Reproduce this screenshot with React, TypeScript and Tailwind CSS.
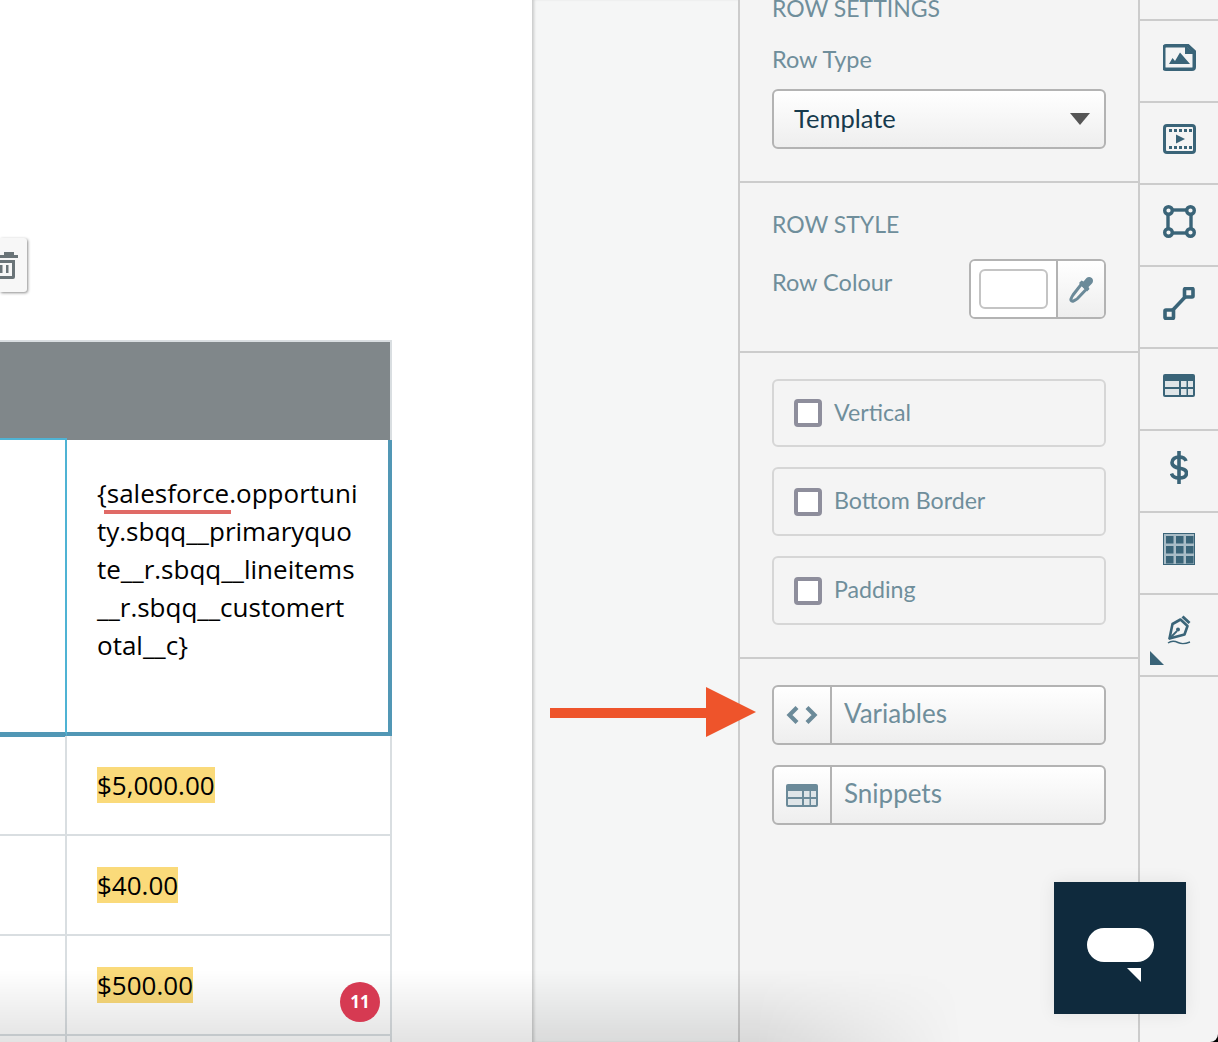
import React from 'react';

const labelFont = "[font-family:Lato,'Liberation_Sans',sans-serif]";

function ImageIcon() {
  return (
    <svg width="33" height="27" viewBox="0 0 33 27">
      <path d="M3 1.750h22l6.250 5.750v15.500a2.250 2.250 0 0 1-2.250 2.250h-26a2.250 2.250 0 0 1-2.250-2.250v-19a2.250 2.250 0 0 1 2.250-2.250z" fill="none" stroke="#3a6478" strokeWidth="3.500" />
      <path d="M22 1l10 9h-10z" fill="#3a6478" />
      <path d="M6 20l3.500-6 2.500 3 5-8.500 10 11.500z" fill="#3a6478" />
    </svg>
  );
}

function FilmIcon() {
  const dots = [6, 11, 16, 21, 26];
  return (
    <svg width="33" height="30" viewBox="0 0 33 30">
      <rect x="1.500" y="1.500" width="30" height="27" rx="2.500" fill="none" stroke="#3a6478" strokeWidth="3" />
      {dots.map((x) => (
        <React.Fragment key={x}>
          <rect x={x} y="5" width="3" height="3" fill="#3a6478" />
          <rect x={x} y="22" width="3" height="3" fill="#3a6478" />
        </React.Fragment>
      ))}
      <path d="M13 10.500l9 4.500-9 4.500z" fill="#3a6478" />
    </svg>
  );
}

function ShapeIcon() {
  return (
    <svg width="33" height="33" viewBox="0 0 33 33" fill="#f4f4f4" stroke="#3a6478" strokeWidth="3.400">
      <rect x="5" y="5" width="23" height="23" fill="none" />
      <circle cx="5.500" cy="5.500" r="3.800" />
      <circle cx="27.500" cy="5.500" r="3.800" />
      <circle cx="5.500" cy="27.500" r="3.800" />
      <circle cx="27.500" cy="27.500" r="3.800" />
    </svg>
  );
}

function LineIcon() {
  return (
    <svg width="32" height="33" viewBox="0 0 32 33" fill="#f4f4f4" stroke="#3a6478" strokeWidth="3.600">
      <path d="M8 25L24 8" fill="none" />
      <rect x="2" y="23" width="8.500" height="8.500" rx="1" />
      <rect x="21.500" y="1.500" width="8.500" height="8.500" rx="1" />
    </svg>
  );
}

function TableIcon({ color }: { color: string }) {
  return (
    <svg width="32" height="23" viewBox="0 0 32 23">
      <rect width="32" height="23" rx="2" fill={color} />
      <rect x="2" y="7" width="14" height="6" fill="#dfe5e8" />
      <rect x="2" y="15" width="14" height="6" fill="#dfe5e8" />
      <rect x="18" y="7" width="5.500" height="6" fill="#dfe5e8" />
      <rect x="18" y="15" width="5.500" height="6" fill="#dfe5e8" />
      <rect x="25" y="7" width="5" height="6" fill="#dfe5e8" />
      <rect x="25" y="15" width="5" height="6" fill="#dfe5e8" />
    </svg>
  );
}

function DollarIcon() {
  return (
    <svg width="18" height="33" viewBox="0 0 18 33" fill="none" stroke="#3a6478" strokeWidth="3.600">
      <path d="M9 0v33" />
      <path d="M16 10c-1-3-4-4-7-4-4 0-7 2-7 5.500 0 8 14.500 3.500 14.500 10.500 0 3.500-3.500 5-7.500 5-3.500 0-6.500-1.500-7.500-4.500" />
    </svg>
  );
}

function GridIcon() {
  const cells = [3, 13, 23];
  return (
    <svg width="32" height="32" viewBox="0 0 32 32">
      <rect width="32" height="32" fill="#3a6478" />
      <rect x="1" y="1" width="30" height="30" fill="#a9bcc6" />
      {cells.map((x) =>
        cells.map((y) => <rect key={`${x}-${y}`} x={x} y={y} width="7.500" height="7.500" fill="#3a6478" />)
      )}
    </svg>
  );
}

function PenIcon() {
  return (
    <svg width="26" height="32" viewBox="0 0 26 32" fill="none" stroke="#3a6478">
      <path d="M16.500 1.500l7 6.500" strokeWidth="3" />
      <path d="M14.500 4.500l7 6.500-3 8.500-15 4 3-14.500z" strokeWidth="2.600" strokeLinejoin="round" />
      <path d="M3 24l8-8" strokeWidth="1.800" />
      <circle cx="12" cy="14.500" r="2" fill="#3a6478" stroke="none" />
      <path d="M2 28c4-3 7-2 10-.5s7 1.500 12-.5" strokeWidth="1.400" />
    </svg>
  );
}

function Dropper() {
  return (
    <svg width="26" height="28" viewBox="0 0 26 28">
      <path d="M13.500 9l5 5-9 9.500c-1.500 1.500-2.500 1.500-4 2.500-1.500.500-3-.5-2.500-2 .5-1.500 1-2.500 2-4z" fill="none" stroke="#6b8a99" strokeWidth="3" />
      <path d="M11 8l2.500-2.500 2 1 3-3.500c2-2 6.500-1 6.500 2.500 0 1.500-.5 2.500-1.500 3.500l-3 3 1 2-2.500 2.500z" fill="#6b8a99" />
    </svg>
  );
}

function RailCell({ children, corner }: { children: React.ReactNode; corner?: boolean }) {
  return (
    <div className="relative h-[82px] shrink-0 flex items-center justify-center pb-[8px] border-b-2 border-[#cccccc]">
      {children}
      {corner && (
        <div className="absolute left-[10px] bottom-[10px] w-0 h-0 border-l-[14px] border-l-transparent border-b-[14px] border-b-[#3a6478] rotate-90" />
      )}
    </div>
  );
}

function CheckRow({ label, className }: { label: string; className: string }) {
  return (
    <div className={`flex items-center gap-3 pl-5 rounded-md border-2 border-[#d6d6d6] ${className}`}>
      <div className="w-7 h-7 rounded-[4px] border-4 border-[#8e8e9c] bg-white" />
      <span className="pb-[2px] text-[23.2px] text-[#6f8e9b]">{label}</span>
    </div>
  );
}

function AddonButton({ icon, label, className }: { icon: React.ReactNode; label: string; className: string }) {
  return (
    <div className={`flex h-[60px] rounded-md border-2 border-[#b3b3b3] bg-gradient-to-b from-white to-[#eeeeee] overflow-hidden ${className}`}>
      <div className="w-[58px] border-r-2 border-[#b3b3b3] flex items-center justify-center">{icon}</div>
      <span className="pl-3 pb-[3px] self-center text-[26px] text-[#6f8e9b]">{label}</span>
    </div>
  );
}

function AmountRow({ amount }: { amount?: string }) {
  return (
    <div className="flex w-[392px] h-[100px] border-b-2 border-[#d9dee1]">
      <div className="w-[67px] border-r-2 border-[#d9dee1]" />
      <div className="w-[325px] border-r-2 border-[#d9dee1] pl-[30px] pt-[31px]">
        {amount && (
          <span className="inline-block h-9 leading-9 bg-[#fada7a] text-black text-[26px]">{amount}</span>
        )}
      </div>
    </div>
  );
}

export default function App() {
  return (
    <div className="relative flex w-[1218px] h-[1042px] overflow-hidden bg-white">
      {/* Document canvas */}
      <div className="w-[532px] shrink-0 pt-[238px] [font-family:'Open_Sans',sans-serif]">
        <div className="w-[27px] h-[54px] rounded-r-[3px] bg-[#f7f7f7] shadow-[1px_1px_3px_rgba(0,0,0,0.45)] flex items-center justify-end pr-[9px]">
          <svg width="18" height="30" viewBox="0 0 18 30" fill="#6a7478">
            <rect x="0" y="5" width="18" height="3" />
            <rect x="4" y="2" width="10" height="3" />
            <path d="M0 10h15v17a2 2 0 0 1-2 2H0v-3h12V13H0z" />
            <rect x="0" y="15" width="2.500" height="8" />
            <rect x="6" y="15" width="2.500" height="8" />
          </svg>
        </div>
        <div className="mt-[48px] w-[392px] h-[100px] bg-[#80878a] border-t-2 border-r-2 border-[#d9dee1]" />
        <div className="flex items-start w-[392px] h-[296px]">
          <div className="w-[67px] h-[299px] -mt-[2px] border-t-2 border-b-[5px] border-r-2 border-t-[#4fb3d4] border-b-[#5197b5] border-r-[#4fb3d4]" />
          <div className="w-[325px] h-[296px] pl-[30px] pt-[34px] border-r-4 border-b-4 border-[#5197b5] text-[26px] leading-[38px] text-black">
            <div>
              {'{'}
              <span className="relative">
                salesforce
                <span className="absolute -left-[3px] -right-[2px] top-[35px] h-1 bg-[#e06a66]" />
              </span>
              .opportuni
            </div>
            <div>ty.sbqq__primaryquo</div>
            <div>te__r.sbqq__lineitems</div>
            <div>__r.sbqq__customert</div>
            <div>otal__c{'}'}</div>
          </div>
        </div>
        <AmountRow amount="$5,000.00" />
        <AmountRow amount="$40.00" />
        <AmountRow amount="$500.00" />
        <AmountRow />
      </div>

      {/* Gutter */}
      <div className="w-[206px] shrink-0 bg-[#f5f6f6] shadow-[inset_3px_0_3px_-1px_rgba(0,0,0,0.18)]" />

      {/* Settings panel */}
      <div className={`w-[400px] shrink-0 bg-[#f4f4f4] border-l-2 border-[#cccccc] ${labelFont}`}>
        <div className="h-[183px] px-8 border-b-2 border-[#cccccc] overflow-hidden">
          <div className="-mt-[7px] text-[23px] leading-[30px] text-[#6f8e9b]">ROW SETTINGS</div>
          <div className="mt-[21px] text-[23.5px] leading-[30px] text-[#6f8e9b]">Row Type</div>
          <div className="mt-[15px] h-[60px] rounded-md border-2 border-[#b3b3b3] bg-gradient-to-b from-white to-[#eeeeee] flex items-center justify-between pl-5 pr-[14px]">
            <span className="pb-[2px] text-[25.500px] text-[#163a4d]">Template</span>
            <div className="w-0 h-0 border-x-[10px] border-x-transparent border-t-[12px] border-t-[#555555]" />
          </div>
        </div>

        <div className="h-[170px] px-8 pt-[26px] border-b-2 border-[#cccccc]">
          <div className="text-[23px] leading-[30px] text-[#6f8e9b]">ROW STYLE</div>
          <div className="mt-[20px] flex justify-between">
            <span className="mt-[8px] text-[23.5px] leading-[30px] text-[#6f8e9b]">Row Colour</span>
            <div className="flex w-[137px] h-[60px] rounded-md border-2 border-[#b3b3b3] overflow-hidden">
              <div className="w-[87px] border-r-2 border-[#b3b3b3] bg-white flex items-center justify-center">
                <div className="w-[69px] h-10 rounded-md border-2 border-[#c4c4c4] bg-white" />
              </div>
              <div className="flex-1 flex items-center justify-center bg-gradient-to-b from-white to-[#eeeeee]">
                <Dropper />
              </div>
            </div>
          </div>
        </div>

        <div className="h-[306px] px-8 pt-[26px] border-b-2 border-[#cccccc]">
          <CheckRow label="Vertical" className="h-[68px]" />
          <CheckRow label="Bottom Border" className="h-[69px] mt-5" />
          <CheckRow label="Padding" className="h-[69px] mt-5" />
        </div>

        <div className="px-8 pt-[26px]">
          <AddonButton
            label="Variables"
            icon={
              <svg width="32" height="20" viewBox="0 0 32 20" fill="none" stroke="#6b8a99" strokeWidth="4.200">
                <path d="M11 2.500L3.500 10l7.500 7.500" />
                <path d="M21 2.500l7.500 7.500-7.500 7.500" />
              </svg>
            }
            className=""
          />
          <AddonButton label="Snippets" icon={<TableIcon color="#6b8a99" />} className="mt-5" />
        </div>
      </div>

      {/* Tool rail */}
      <div className="flex-1 bg-[#f4f4f4] border-l-2 border-[#cccccc] flex flex-col -mt-[61px]">
        <RailCell>{null}</RailCell>
        <RailCell><ImageIcon /></RailCell>
        <RailCell><FilmIcon /></RailCell>
        <RailCell><ShapeIcon /></RailCell>
        <RailCell><LineIcon /></RailCell>
        <RailCell><TableIcon color="#3a6478" /></RailCell>
        <RailCell><DollarIcon /></RailCell>
        <RailCell><GridIcon /></RailCell>
        <RailCell corner><PenIcon /></RailCell>
      </div>

      {/* Bottom fade, dies out under the panel */}
      <div className="absolute left-0 right-0 bottom-0 h-[72px] bg-gradient-to-b from-transparent to-[#0000001c] pointer-events-none [mask-image:linear-gradient(to_right,black_62%,transparent_79%)]" />

      {/* Callout arrow */}
      <svg className="absolute left-[550px] top-[687px]" width="207" height="50" viewBox="0 0 207 50">
        <path d="M0 21h156V0l50 25-50 25V31H0z" fill="#ee542b" />
      </svg>

      {/* Notification badge */}
      <div className="absolute left-[340px] top-[982px] w-10 h-10 rounded-full bg-[#d63a52] flex items-center justify-center text-white text-[17px] font-bold [font-family:'Open_Sans',sans-serif]">
        11
      </div>

      {/* Chat launcher */}
      <div className="absolute left-[1054px] top-[882px] w-[132px] h-[132px] bg-[#0f2a3d] shadow-[0_0_16px_rgba(0,0,0,0.08)]">
        <svg className="absolute left-[33px] top-[46px]" width="67" height="54" viewBox="0 0 67 54">
          <rect width="67" height="34" rx="17" fill="white" />
          <path d="M40 40h14v14z" fill="white" />
        </svg>
      </div>

      {/* Window corner */}
      <div className="absolute right-0 bottom-0 w-2 h-3 bg-black">
        <div className="w-full h-full rounded-br-[10px] bg-[#f4f4f4]" />
      </div>
    </div>
  );
}
